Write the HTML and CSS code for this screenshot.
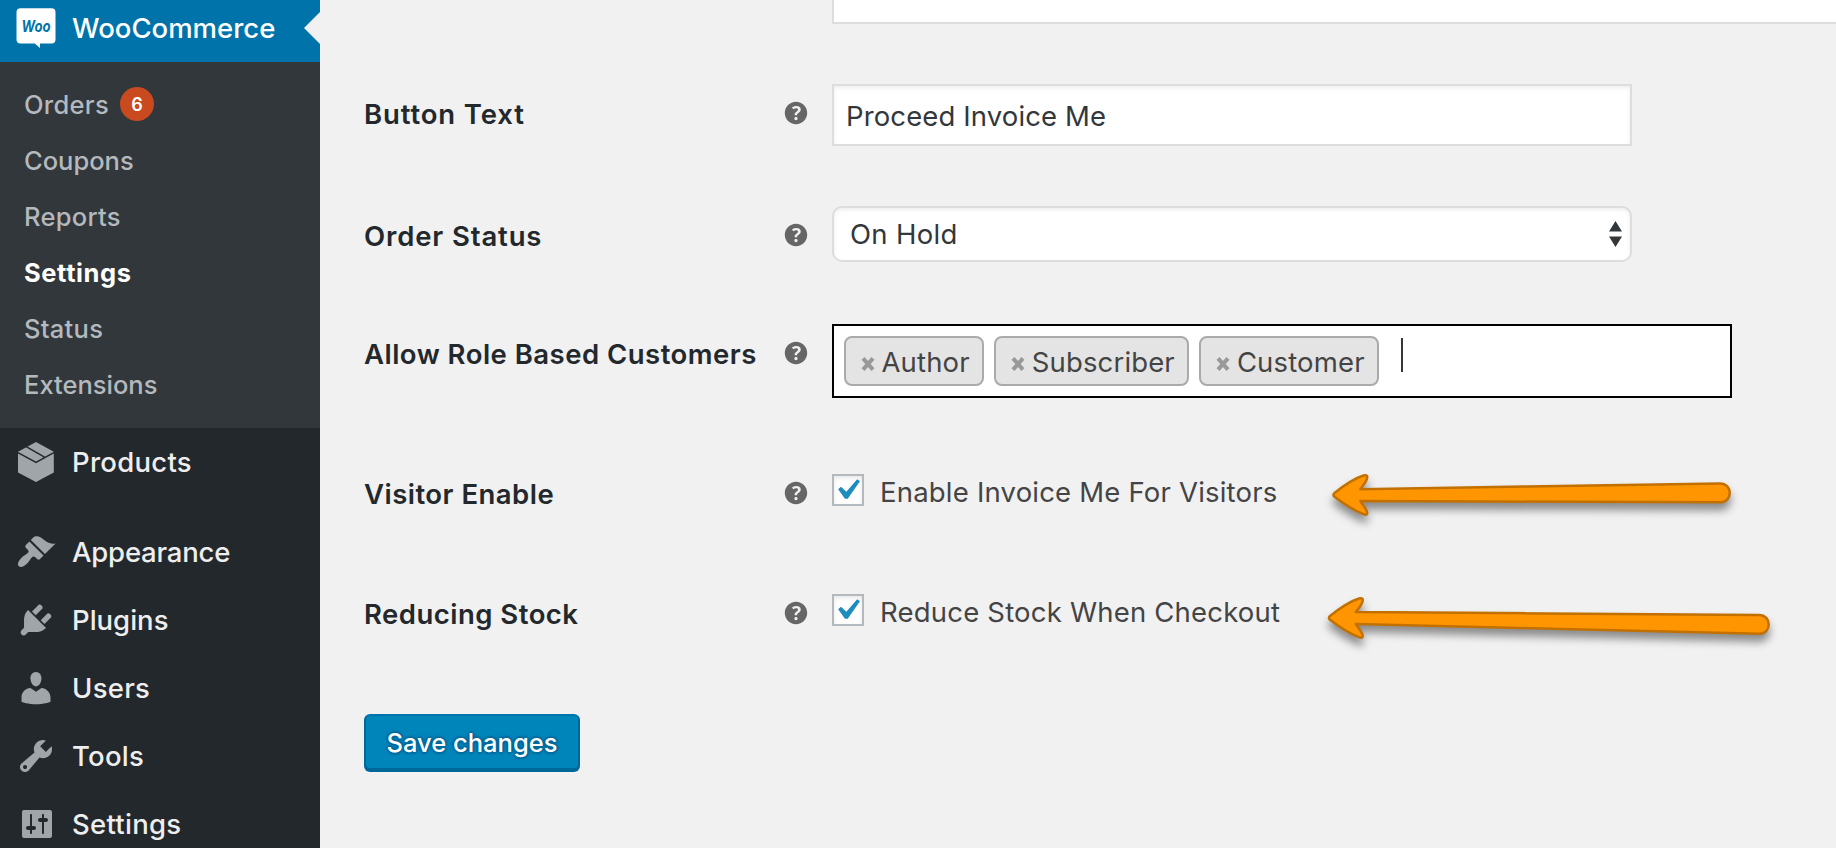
FILE: index.html
```html
<!DOCTYPE html>
<html lang="en">
<head>
<meta charset="utf-8">
<title>WooCommerce Settings</title>
<link rel="stylesheet" href="styles.css">
</head>
<body>
<svg class="defs" width="0" height="0" aria-hidden="true">
  <symbol id="help" viewBox="0 0 20 20"><path d="M17 10c0-3.87-3.14-7-7-7-3.87 0-7 3.13-7 7s3.13 7 7 7c3.86 0 7-3.13 7-7zm-6.3 1.48H9.14v-.43c0-.38.08-.7.24-.98s.46-.57.88-.89c.41-.29.68-.53.81-.71.14-.18.2-.39.2-.62 0-.25-.09-.44-.28-.58-.19-.13-.45-.19-.79-.19-.58 0-1.25.19-2 .57l-.64-1.28c.87-.49 1.8-.74 2.77-.74.81 0 1.45.2 1.92.58.48.39.71.91.71 1.55 0 .43-.09.8-.29 1.11-.19.32-.57.67-1.11 1.06-.38.28-.61.49-.71.63-.1.15-.15.34-.15.57v.35zm-1.47 2.74c-.18-.17-.27-.42-.27-.73 0-.33.08-.58.26-.75s.43-.25.77-.25c.32 0 .57.09.75.26s.27.42.27.74c0 .3-.09.55-.27.72-.18.18-.43.27-.75.27-.33 0-.58-.09-.76-.26z"/></symbol>
  <symbol id="check" viewBox="0 0 20 20"><path d="M14.83 4.89l1.34.94-5.81 8.38H9.02L5.78 9.67l1.34-1.25 2.57 2.4z"/></symbol>
  <symbol id="remove" viewBox="0 0 14 14"><path d="M2 1.4l10 11.2M12 1.4L2 12.6" fill="none" stroke="#999" stroke-width="4"/></symbol>
</svg>
<div class="admin">
  <nav class="menu">
    <a class="menu-item current">
      <svg class="menu-icon" viewBox="0 0 40 40">
        <path class="bubble" d="M4.5.3h31a4 4 0 0 1 4 4v27.200a4 4 0 0 1-4 4H24V40l-5.200-4.500H4.500a4 4 0 0 1-4-4V4.300a4 4 0 0 1 4-4z"/>
        <text class="woo" x="5.500" y="24" textLength="29" lengthAdjust="spacingAndGlyphs">Woo</text>
      </svg>
      <span>WooCommerce</span>
    </a>
    <div class="submenu">
      <a class="loose">Orders <b class="badge">6</b></a>
      <a>Coupons</a>
      <a class="loose">Reports</a>
      <a class="active">Settings</a>
      <a class="loose">Status</a>
      <a>Extensions</a>
    </div>
    <a class="menu-item loose">
      <svg class="menu-icon" viewBox="0 0 40 40">
        <path d="M20 0l17.800 9.800v20.600L20 40 2 30.400V9.800z"/>
        <path class="seam" d="M1.500 10.300L20 20.300l18.300-10M10.200 4.700l18.300 10.500"/>
      </svg>
      <span>Products</span>
    </a>
    <div class="separator"></div>
    <a class="menu-item tight">
      <svg class="menu-icon" viewBox="0 0 20 20"><path d="M14.480 11.060L7.410 3.990l1.500-1.500c.5-.56 2.300-.47 3.510.32 1.210.8 1.430 1.280 2.910 2.100 1.180.64 2.450 1.260 4.450.85zm-.71.71L6.700 4.700 4.930 6.470c-.39.39-.39 1.020 0 1.410l1.060 1.060c.39.39.39 1.030 0 1.420-.6.6-1.430 1.110-2.210 1.690-.35.26-.7.53-1.010.84C1.430 14.230.4 16.080 1.400 17.070c.99 1 2.840-.03 4.180-1.360.31-.31.58-.66.85-1.020.57-.78 1.080-1.610 1.690-2.210.39-.39 1.020-.39 1.410 0l1.060 1.060c.39.39 1.020.39 1.410 0z"/></svg>
      <span>Appearance</span>
    </a>
    <a class="menu-item">
      <svg class="menu-icon" viewBox="0 0 20 20"><path d="M13.110 4.360L9.870 7.600 8 5.730l3.240-3.240c.35-.34 1.050-.2 1.560.32.52.51.66 1.210.31 1.550zm-8 1.770l.91-1.120 9.010 9.010-1.190.84c-.71.71-2.630 1.160-3.820 1.160H6.140L4.900 17.260c-.59.59-1.540.59-2.120 0-.59-.58-.59-1.530 0-2.120l1.240-1.240v-3.880c0-1.130.4-3.190 1.090-3.890zm7.260 3.970l3.240-3.240c.34-.35 1.040-.21 1.550.31.52.51.66 1.210.31 1.550l-3.240 3.250z"/></svg>
      <span>Plugins</span>
    </a>
    <a class="menu-item loose">
      <svg class="menu-icon" viewBox="0 0 20 20"><path d="M10 9.250c-2.270 0-2.730-3.440-2.730-3.440C7 4.020 7.820 2 9.970 2c2.160 0 2.980 2.020 2.710 3.810 0 0-.41 3.440-2.680 3.440zm0 2.570L12.720 10c2.390 0 4.520 2.330 4.520 4.530v2.490s-3.650 1.130-7.240 1.130c-3.650 0-7.240-1.130-7.240-1.130v-2.490c0-2.250 1.940-4.480 4.470-4.480z"/></svg>
      <span>Users</span>
    </a>
    <a class="menu-item loose">
      <svg class="menu-icon" viewBox="0 0 20 20"><path d="M16.680 9.770c-1.340 1.340-3.300 1.670-4.950.99l-5.410 6.520c-.99.99-2.590.99-3.580 0s-.99-2.590 0-3.570l6.520-5.420c-.68-1.650-.35-3.610.99-4.950 1.280-1.280 3.120-1.620 4.720-1.060l-2.890 2.890 2.820 2.820 2.860-2.870c.53 1.580.18 3.390-1.080 4.650zM3.810 16.210c.4.39 1.040.39 1.430 0 .4-.4.4-1.040 0-1.430-.39-.4-1.030-.4-1.430 0-.39.39-.39 1.030 0 1.430z"/></svg>
      <span>Tools</span>
    </a>
    <a class="menu-item loose">
      <svg class="menu-icon" viewBox="0 0 20 20"><path d="M18 16V4c0-.55-.45-1-1-1H4c-.55 0-1 .45-1 1v12c0 .55.45 1 1 1h13c.55 0 1-.45 1-1zM8 11h1c.55 0 1 .45 1 1s-.45 1-1 1H8v1.500c0 .28-.22.5-.5.5s-.5-.22-.5-.5V13H6c-.55 0-1-.45-1-1s.45-1 1-1h1V5.500c0-.28.22-.5.5-.5s.5.22.5.5V11zm5-2h-1c-.55 0-1-.45-1-1s.45-1 1-1h1V5.500c0-.28.22-.5.5-.5s.5.22.5.5V7h1c.55 0 1 .45 1 1s-.45 1-1 1h-1v5.500c0 .28-.22.5-.5.5s-.5-.22-.5-.5V9z"/></svg>
      <span>Settings</span>
    </a>
  </nav>

  <main class="content">
    <div class="textarea"></div>
    <div class="row row-text">
      <div class="label spaced">Button Text</div>
      <svg class="help"><use href="#help"/></svg>
      <div class="input">Proceed Invoice Me</div>
    </div>
    <div class="row row-select">
      <div class="label spaced">Order Status</div>
      <svg class="help"><use href="#help"/></svg>
      <div class="select"><span>On Hold</span>
        <svg class="updown" viewBox="0 0 13 26"><path d="M6.500 0L13 10.500H0zM6.500 26L13 15.500H0z"/></svg>
      </div>
    </div>
    <div class="row row-roles">
      <div class="label">Allow Role Based Customers</div>
      <svg class="help"><use href="#help"/></svg>
      <div class="roles">
        <span class="tag"><svg><use href="#remove"/></svg>Author</span>
        <span class="tag wide"><svg><use href="#remove"/></svg>Subscriber</span>
        <span class="tag"><svg><use href="#remove"/></svg>Customer</span>
        <i class="caret"></i>
      </div>
    </div>
    <div class="row row-visitor">
      <div class="label">Visitor Enable</div>
      <svg class="help"><use href="#help"/></svg>
      <div class="option"><span class="checkbox"><svg><use href="#check"/></svg></span><span class="option-text">Enable Invoice Me For Visitors</span></div>
    </div>
    <div class="row row-stock">
      <div class="label">Reducing Stock</div>
      <svg class="help"><use href="#help"/></svg>
      <div class="option"><span class="checkbox"><svg><use href="#check"/></svg></span><span class="option-text">Reduce Stock When Checkout</span></div>
    </div>
    <div class="save">Save changes</div>

    <svg class="arrows" viewBox="0 0 500 210">
      <path d="M24.200 43.200C32 37 44 28.500 53.500 25.500C57 24.500 58 26 56.700 29.500C55 34 52 36.500 50.300 39.200L410 33.500C423 33.500 423 52.300 410 52.300L50.300 51C52 54 55 57 56.700 61C58 64.500 56.500 65.500 53.500 64.200C44 60.500 32 52.500 24.200 46.500Q22.800 45 24.200 43.200z"/>
      <path d="M19.700 166.200C27.500 160 39.500 151.500 49 148.500C52.500 147.500 53.500 149 52.200 152.500C50.500 157 47.500 159.500 45.800 162L449 165C462 165 462 183.800 449 183.800L45.800 174C47.500 177 50.500 180 52.200 184C53.500 187.500 52 188.500 49 187.200C39.500 183.500 27.500 175.500 19.700 169.500Q18.300 168 19.700 166.200z"/>
    </svg>
  </main>
</div>
</body>
</html>
```
FILE: styles.css
```css
* { box-sizing: border-box; }

body {
  margin: 0;
  background: #f1f1f1;
  color: #444;
  font-family: Inter, "Liberation Sans", sans-serif;
  font-size: 27.5px;
}

svg { display: block; flex: none; }
.defs { position: absolute; }

.admin {
  display: grid;
  grid-template-columns: 320px 1fr;
  height: 848px;
  overflow: hidden;
}

/* Side menu */
.menu {
  background: #23282d;
  height: 848px;
  overflow: hidden;
}

.menu-item {
  display: flex;
  align-items: center;
  gap: 16px;
  height: 68px;
  padding-left: 16px;
  color: #eee;
  font-weight: 450;
}

.menu-icon { width: 40px; height: 40px; fill: #a0a5aa; }
.seam { fill: none; stroke: #23282d; stroke-width: 1.5; }

.menu-item.current {
  position: relative;
  height: 62px;
  padding-bottom: 6px;
  background: #0073aa;
  color: #fff;
  font-weight: 500;
}

.menu-item.current::after {
  content: "";
  position: absolute;
  right: 0;
  top: 12px;
  border: 16px solid transparent;
  border-left-width: 0;
  border-right-color: #f1f1f1;
}

.bubble { fill: #fff; }

.woo {
  fill: #0073aa;
  font-size: 16.5px;
  font-weight: 750;
  font-style: italic;
}

.submenu {
  display: flex;
  flex-direction: column;
  padding: 14px 0 16px 24px;
  background: #32373c;
  color: #b4b9be;
  font-size: 25.5px;
  font-weight: 450;
}

.submenu a {
  display: flex;
  align-items: center;
  height: 56px;
}

.submenu .active { color: #fff; font-weight: 650; letter-spacing: .6px; }

.badge {
  display: grid;
  place-items: center;
  width: 34px;
  height: 34px;
  margin-left: 11px;
  border-radius: 50%;
  background: #ca4a1f;
  color: #fff;
  font-size: 18px;
  font-weight: 600;
  letter-spacing: 0;
}

.separator { height: 22px; }
.loose { letter-spacing: .28px; }
.tight { letter-spacing: -.2px; }

/* Settings form */
.content { position: relative; padding-left: 44px; }

.textarea {
  height: 24px;
  margin-left: 468px;
  background: #fff;
  border: solid #ddd;
  border-width: 0 0 2px 2px;
}

.row {
  display: grid;
  grid-template-columns: 416px 52px 1fr;
  align-items: start;
}

.row-text { margin-top: 60px; }
.row-select { margin-top: 60px; }
.row-roles { margin-top: 62px; }
.row-visitor { margin-top: 66px; }
.row-stock { margin-top: 74px; }

.label {
  padding-top: 14px;
  color: #23282d;
  font-weight: 620;
  line-height: 32px;
  letter-spacing: .48px;
}

.label.spaced { letter-spacing: .87px; }

.help { width: 32px; height: 32px; margin-top: 12.5px; fill: #666; }

.input,
.select {
  display: flex;
  align-items: center;
  width: 800px;
  background: #fff;
  border: 2px solid #ddd;
  box-shadow: inset 0 2px 4px rgba(0, 0, 0, .07);
  color: #32373c;
  letter-spacing: .12px;
}

.input { height: 62px; padding: 2px 0 0 12px; }

.select {
  justify-content: space-between;
  height: 56px;
  padding: 0 8px 0 16px;
  border-radius: 10px;
  letter-spacing: .3px;
}

.updown { width: 13px; height: 26px; fill: #32373c; }

.roles {
  display: flex;
  align-items: flex-start;
  gap: 10px;
  width: 900px;
  height: 74px;
  padding: 10px;
  background: #fff;
  border: 2px solid #000;
}

.tag {
  display: flex;
  align-items: center;
  height: 50px;
  padding: 2px 12px 0 14.500px;
  background: #e4e4e4;
  border: 2px solid #aaa;
  border-radius: 8px;
  letter-spacing: .15px;
}

.tag.wide { padding: 2px 12.500px 0 15px; }

.tag svg { width: 14px; height: 14px; margin: 3px 7px 0 0; }

.caret {
  width: 2px;
  height: 34px;
  margin: 2px 0 0 12px;
  background: #32373c;
}

.option {
  display: flex;
  gap: 16px;
  height: 46px;
  padding-top: 10px;
}

.option-text { line-height: 36px; letter-spacing: .2px; }

.checkbox {
  display: grid;
  place-content: center;
  width: 32px;
  height: 32px;
  padding-right: 2px;
  background: #fff;
  border: 2px solid #b4b9be;
  box-shadow: inset 0 2px 4px rgba(0, 0, 0, .1);
}

.checkbox svg { width: 42px; height: 42px; fill: #1e8cbe; }

.save {
  display: grid;
  place-items: center;
  width: 216px;
  height: 56px;
  margin-top: 84px;
  background: #0085ba;
  border: 2px solid;
  border-color: #0073aa #006799 #006799;
  border-radius: 6px;
  box-shadow: 0 2px 0 #006799;
  color: #fff;
  font-size: 25.5px;
  font-weight: 530;
  letter-spacing: 0;
  text-shadow: 0 -2px 2px #006799, 2px 0 2px #006799, 0 2px 2px #006799, -2px 0 2px #006799;
}

/* Annotation arrows drawn over the form */
.arrows {
  position: absolute;
  left: 990px;
  top: 450px;
  width: 500px;
  height: 210px;
  fill: #ff9500;
  stroke: #c27000;
  stroke-width: 2.5;
  stroke-linejoin: round;
  filter: drop-shadow(0 7px 4px rgba(0, 0, 0, .42));
}
```
